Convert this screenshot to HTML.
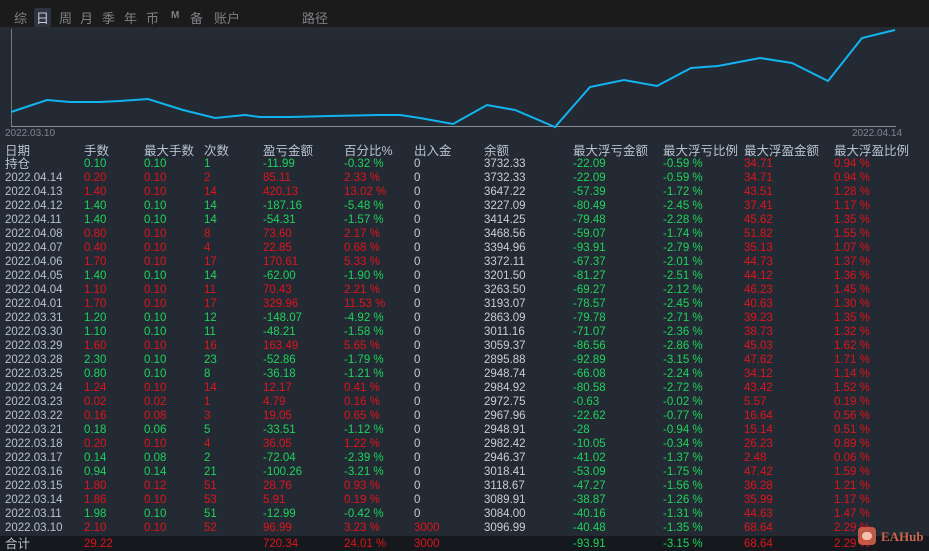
<!DOCTYPE html>
<html><head><meta charset="utf-8"><style>
*{margin:0;padding:0;box-sizing:border-box}
body{width:929px;height:551px;overflow:hidden;background:#232a33;font-family:"Liberation Sans","Noto Sans CJK SC",sans-serif;position:relative;color:#c4cad3}
.top{position:absolute;left:0;top:0;width:929px;height:27px;background:#1b1b1b}
.tab{position:absolute;top:8px;font-size:13px;color:#7d8085}
.sel{background:#2b3440;color:#c8ccd3;padding:0 2px;border-radius:2px}
.r{position:absolute;left:0;width:929px;height:14px;font-size:11.5px;line-height:14px;white-space:nowrap}
.r span{position:absolute}
.h{font-size:12.5px}
.g{color:#1fd35c}.d{color:#e0141c}.w{color:#c9cdd4}.dt{color:#b8c2d0}
.c0{left:5px}.c1{left:84px}.c2{left:144px}.c3{left:204px}.c4{left:263px}.c5{left:344px}.c6{left:414px}.c7{left:484px}.c8{left:573px}.c9{left:663px}.c10{left:744px}.c11{left:834px}
.tot{position:absolute;left:0;top:536px;width:929px;height:15px;background:#15181c}
</style></head><body>
<div class="top"></div>
<span class="tab" style="left:14px">综</span>
<span class="tab sel" style="left:34px">日</span>
<span class="tab" style="left:59px">周</span>
<span class="tab" style="left:80px">月</span>
<span class="tab" style="left:102px">季</span>
<span class="tab" style="left:124px">年</span>
<span class="tab" style="left:146px">币</span>
<span class="tab" style="left:171px;font-size:10px;top:10px;font-weight:bold">M</span>
<span class="tab" style="left:190px">备</span>
<span class="tab" style="left:214px">账户</span>
<span class="tab" style="left:302px">路径</span>
<div style="position:absolute;left:0;top:27px;width:929px;height:8px;background:#252b33"></div>
<svg style="position:absolute;left:0;top:0" width="929" height="140">
<line x1="11.5" y1="29" x2="11.5" y2="126" stroke="#777" stroke-width="1"/>
<line x1="11" y1="126.5" x2="896" y2="126.5" stroke="#8a8f96" stroke-width="1"/>
<polyline fill="none" stroke="#12b4f0" stroke-width="2" points="11,112 47,100 70,102 100,102 120,101 148,99 183,110 215,118 245,115 260,117 290,117 330,116 380,115 400,115 420,118 453,124 487,105 515,110 555,127 590,87 624,80 657,86 691,68 718,66 760,58 792,63 828,81 862,38 895,30"/>
</svg>
<span style="position:absolute;left:5px;top:128px;font-size:10px;color:#7d8590">2022.03.10</span>
<span style="position:absolute;left:852px;top:128px;font-size:10px;color:#7d8590">2022.04.14</span>
<div class="r h dt" style="top:144px"><span class="c0">日期</span><span class="c1">手数</span><span class="c2">最大手数</span><span class="c3">次数</span><span class="c4">盈亏金额</span><span class="c5">百分比%</span><span class="c6">出入金</span><span class="c7">余额</span><span class="c8">最大浮亏金额</span><span class="c9">最大浮亏比例</span><span class="c10">最大浮盈金额</span><span class="c11">最大浮盈比例</span></div>
<div class="r" style="top:157px"><span class="c0 dt h">持仓</span><span class="c1 g">0.10</span><span class="c2 g">0.10</span><span class="c3 g">1</span><span class="c4 g">-11.99</span><span class="c5 g">-0.32 %</span><span class="c6 w">0</span><span class="c7 w">3732.33</span><span class="c8 g">-22.09</span><span class="c9 g">-0.59 %</span><span class="c10 d">34.71</span><span class="c11 d">0.94 %</span></div>
<div class="r" style="top:171px"><span class="c0 dt">2022.04.14</span><span class="c1 d">0.20</span><span class="c2 d">0.10</span><span class="c3 d">2</span><span class="c4 d">85.11</span><span class="c5 d">2.33 %</span><span class="c6 w">0</span><span class="c7 w">3732.33</span><span class="c8 g">-22.09</span><span class="c9 g">-0.59 %</span><span class="c10 d">34.71</span><span class="c11 d">0.94 %</span></div>
<div class="r" style="top:185px"><span class="c0 dt">2022.04.13</span><span class="c1 d">1.40</span><span class="c2 d">0.10</span><span class="c3 d">14</span><span class="c4 d">420.13</span><span class="c5 d">13.02 %</span><span class="c6 w">0</span><span class="c7 w">3647.22</span><span class="c8 g">-57.39</span><span class="c9 g">-1.72 %</span><span class="c10 d">43.51</span><span class="c11 d">1.28 %</span></div>
<div class="r" style="top:199px"><span class="c0 dt">2022.04.12</span><span class="c1 g">1.40</span><span class="c2 g">0.10</span><span class="c3 g">14</span><span class="c4 g">-187.16</span><span class="c5 g">-5.48 %</span><span class="c6 w">0</span><span class="c7 w">3227.09</span><span class="c8 g">-80.49</span><span class="c9 g">-2.45 %</span><span class="c10 d">37.41</span><span class="c11 d">1.17 %</span></div>
<div class="r" style="top:213px"><span class="c0 dt">2022.04.11</span><span class="c1 g">1.40</span><span class="c2 g">0.10</span><span class="c3 g">14</span><span class="c4 g">-54.31</span><span class="c5 g">-1.57 %</span><span class="c6 w">0</span><span class="c7 w">3414.25</span><span class="c8 g">-79.48</span><span class="c9 g">-2.28 %</span><span class="c10 d">45.62</span><span class="c11 d">1.35 %</span></div>
<div class="r" style="top:227px"><span class="c0 dt">2022.04.08</span><span class="c1 d">0.80</span><span class="c2 d">0.10</span><span class="c3 d">8</span><span class="c4 d">73.60</span><span class="c5 d">2.17 %</span><span class="c6 w">0</span><span class="c7 w">3468.56</span><span class="c8 g">-59.07</span><span class="c9 g">-1.74 %</span><span class="c10 d">51.82</span><span class="c11 d">1.55 %</span></div>
<div class="r" style="top:241px"><span class="c0 dt">2022.04.07</span><span class="c1 d">0.40</span><span class="c2 d">0.10</span><span class="c3 d">4</span><span class="c4 d">22.85</span><span class="c5 d">0.68 %</span><span class="c6 w">0</span><span class="c7 w">3394.96</span><span class="c8 g">-93.91</span><span class="c9 g">-2.79 %</span><span class="c10 d">35.13</span><span class="c11 d">1.07 %</span></div>
<div class="r" style="top:255px"><span class="c0 dt">2022.04.06</span><span class="c1 d">1.70</span><span class="c2 d">0.10</span><span class="c3 d">17</span><span class="c4 d">170.61</span><span class="c5 d">5.33 %</span><span class="c6 w">0</span><span class="c7 w">3372.11</span><span class="c8 g">-67.37</span><span class="c9 g">-2.01 %</span><span class="c10 d">44.73</span><span class="c11 d">1.37 %</span></div>
<div class="r" style="top:269px"><span class="c0 dt">2022.04.05</span><span class="c1 g">1.40</span><span class="c2 g">0.10</span><span class="c3 g">14</span><span class="c4 g">-62.00</span><span class="c5 g">-1.90 %</span><span class="c6 w">0</span><span class="c7 w">3201.50</span><span class="c8 g">-81.27</span><span class="c9 g">-2.51 %</span><span class="c10 d">44.12</span><span class="c11 d">1.36 %</span></div>
<div class="r" style="top:283px"><span class="c0 dt">2022.04.04</span><span class="c1 d">1.10</span><span class="c2 d">0.10</span><span class="c3 d">11</span><span class="c4 d">70.43</span><span class="c5 d">2.21 %</span><span class="c6 w">0</span><span class="c7 w">3263.50</span><span class="c8 g">-69.27</span><span class="c9 g">-2.12 %</span><span class="c10 d">46.23</span><span class="c11 d">1.45 %</span></div>
<div class="r" style="top:297px"><span class="c0 dt">2022.04.01</span><span class="c1 d">1.70</span><span class="c2 d">0.10</span><span class="c3 d">17</span><span class="c4 d">329.96</span><span class="c5 d">11.53 %</span><span class="c6 w">0</span><span class="c7 w">3193.07</span><span class="c8 g">-78.57</span><span class="c9 g">-2.45 %</span><span class="c10 d">40.63</span><span class="c11 d">1.30 %</span></div>
<div class="r" style="top:311px"><span class="c0 dt">2022.03.31</span><span class="c1 g">1.20</span><span class="c2 g">0.10</span><span class="c3 g">12</span><span class="c4 g">-148.07</span><span class="c5 g">-4.92 %</span><span class="c6 w">0</span><span class="c7 w">2863.09</span><span class="c8 g">-79.78</span><span class="c9 g">-2.71 %</span><span class="c10 d">39.23</span><span class="c11 d">1.35 %</span></div>
<div class="r" style="top:325px"><span class="c0 dt">2022.03.30</span><span class="c1 g">1.10</span><span class="c2 g">0.10</span><span class="c3 g">11</span><span class="c4 g">-48.21</span><span class="c5 g">-1.58 %</span><span class="c6 w">0</span><span class="c7 w">3011.16</span><span class="c8 g">-71.07</span><span class="c9 g">-2.36 %</span><span class="c10 d">38.73</span><span class="c11 d">1.32 %</span></div>
<div class="r" style="top:339px"><span class="c0 dt">2022.03.29</span><span class="c1 d">1.60</span><span class="c2 d">0.10</span><span class="c3 d">16</span><span class="c4 d">163.49</span><span class="c5 d">5.65 %</span><span class="c6 w">0</span><span class="c7 w">3059.37</span><span class="c8 g">-86.56</span><span class="c9 g">-2.86 %</span><span class="c10 d">45.03</span><span class="c11 d">1.62 %</span></div>
<div class="r" style="top:353px"><span class="c0 dt">2022.03.28</span><span class="c1 g">2.30</span><span class="c2 g">0.10</span><span class="c3 g">23</span><span class="c4 g">-52.86</span><span class="c5 g">-1.79 %</span><span class="c6 w">0</span><span class="c7 w">2895.88</span><span class="c8 g">-92.89</span><span class="c9 g">-3.15 %</span><span class="c10 d">47.62</span><span class="c11 d">1.71 %</span></div>
<div class="r" style="top:367px"><span class="c0 dt">2022.03.25</span><span class="c1 g">0.80</span><span class="c2 g">0.10</span><span class="c3 g">8</span><span class="c4 g">-36.18</span><span class="c5 g">-1.21 %</span><span class="c6 w">0</span><span class="c7 w">2948.74</span><span class="c8 g">-66.08</span><span class="c9 g">-2.24 %</span><span class="c10 d">34.12</span><span class="c11 d">1.14 %</span></div>
<div class="r" style="top:381px"><span class="c0 dt">2022.03.24</span><span class="c1 d">1.24</span><span class="c2 d">0.10</span><span class="c3 d">14</span><span class="c4 d">12.17</span><span class="c5 d">0.41 %</span><span class="c6 w">0</span><span class="c7 w">2984.92</span><span class="c8 g">-80.58</span><span class="c9 g">-2.72 %</span><span class="c10 d">43.42</span><span class="c11 d">1.52 %</span></div>
<div class="r" style="top:395px"><span class="c0 dt">2022.03.23</span><span class="c1 d">0.02</span><span class="c2 d">0.02</span><span class="c3 d">1</span><span class="c4 d">4.79</span><span class="c5 d">0.16 %</span><span class="c6 w">0</span><span class="c7 w">2972.75</span><span class="c8 g">-0.63</span><span class="c9 g">-0.02 %</span><span class="c10 d">5.57</span><span class="c11 d">0.19 %</span></div>
<div class="r" style="top:409px"><span class="c0 dt">2022.03.22</span><span class="c1 d">0.16</span><span class="c2 d">0.08</span><span class="c3 d">3</span><span class="c4 d">19.05</span><span class="c5 d">0.65 %</span><span class="c6 w">0</span><span class="c7 w">2967.96</span><span class="c8 g">-22.62</span><span class="c9 g">-0.77 %</span><span class="c10 d">16.64</span><span class="c11 d">0.56 %</span></div>
<div class="r" style="top:423px"><span class="c0 dt">2022.03.21</span><span class="c1 g">0.18</span><span class="c2 g">0.06</span><span class="c3 g">5</span><span class="c4 g">-33.51</span><span class="c5 g">-1.12 %</span><span class="c6 w">0</span><span class="c7 w">2948.91</span><span class="c8 g">-28</span><span class="c9 g">-0.94 %</span><span class="c10 d">15.14</span><span class="c11 d">0.51 %</span></div>
<div class="r" style="top:437px"><span class="c0 dt">2022.03.18</span><span class="c1 d">0.20</span><span class="c2 d">0.10</span><span class="c3 d">4</span><span class="c4 d">36.05</span><span class="c5 d">1.22 %</span><span class="c6 w">0</span><span class="c7 w">2982.42</span><span class="c8 g">-10.05</span><span class="c9 g">-0.34 %</span><span class="c10 d">26.23</span><span class="c11 d">0.89 %</span></div>
<div class="r" style="top:451px"><span class="c0 dt">2022.03.17</span><span class="c1 g">0.14</span><span class="c2 g">0.08</span><span class="c3 g">2</span><span class="c4 g">-72.04</span><span class="c5 g">-2.39 %</span><span class="c6 w">0</span><span class="c7 w">2946.37</span><span class="c8 g">-41.02</span><span class="c9 g">-1.37 %</span><span class="c10 d">2.48</span><span class="c11 d">0.06 %</span></div>
<div class="r" style="top:465px"><span class="c0 dt">2022.03.16</span><span class="c1 g">0.94</span><span class="c2 g">0.14</span><span class="c3 g">21</span><span class="c4 g">-100.26</span><span class="c5 g">-3.21 %</span><span class="c6 w">0</span><span class="c7 w">3018.41</span><span class="c8 g">-53.09</span><span class="c9 g">-1.75 %</span><span class="c10 d">47.42</span><span class="c11 d">1.59 %</span></div>
<div class="r" style="top:479px"><span class="c0 dt">2022.03.15</span><span class="c1 d">1.80</span><span class="c2 d">0.12</span><span class="c3 d">51</span><span class="c4 d">28.76</span><span class="c5 d">0.93 %</span><span class="c6 w">0</span><span class="c7 w">3118.67</span><span class="c8 g">-47.27</span><span class="c9 g">-1.56 %</span><span class="c10 d">36.28</span><span class="c11 d">1.21 %</span></div>
<div class="r" style="top:493px"><span class="c0 dt">2022.03.14</span><span class="c1 d">1.86</span><span class="c2 d">0.10</span><span class="c3 d">53</span><span class="c4 d">5.91</span><span class="c5 d">0.19 %</span><span class="c6 w">0</span><span class="c7 w">3089.91</span><span class="c8 g">-38.87</span><span class="c9 g">-1.26 %</span><span class="c10 d">35.99</span><span class="c11 d">1.17 %</span></div>
<div class="r" style="top:507px"><span class="c0 dt">2022.03.11</span><span class="c1 g">1.98</span><span class="c2 g">0.10</span><span class="c3 g">51</span><span class="c4 g">-12.99</span><span class="c5 g">-0.42 %</span><span class="c6 w">0</span><span class="c7 w">3084.00</span><span class="c8 g">-40.16</span><span class="c9 g">-1.31 %</span><span class="c10 d">44.63</span><span class="c11 d">1.47 %</span></div>
<div class="r" style="top:521px"><span class="c0 dt">2022.03.10</span><span class="c1 d">2.10</span><span class="c2 d">0.10</span><span class="c3 d">52</span><span class="c4 d">96.99</span><span class="c5 d">3.23 %</span><span class="c6 d">3000</span><span class="c7 w">3096.99</span><span class="c8 g">-40.48</span><span class="c9 g">-1.35 %</span><span class="c10 d">68.64</span><span class="c11 d">2.29 %</span></div>
<div class="tot"></div>
<div class="r" style="top:537px"><span class="c0 dt h">合计</span><span class="c1 d">29.22</span><span class="c4 d">720.34</span><span class="c5 d">24.01 %</span><span class="c6 d">3000</span><span class="c8 g">-93.91</span><span class="c9 g">-3.15 %</span><span class="c10 d">68.64</span><span class="c11 d">2.29 %</span></div>
<div style="position:absolute;left:858px;top:527px;width:18px;height:18px;border-radius:4px;background:#d9644a;opacity:.85"></div>
<div style="position:absolute;left:862px;top:532px;width:10px;height:8px;border-radius:4px;background:#f2c0b0"></div>
<span style="position:absolute;left:881px;top:529px;font-size:13px;color:#c8664e;font-family:'Liberation Serif',serif;font-weight:bold">EAHub</span>
</body></html>
